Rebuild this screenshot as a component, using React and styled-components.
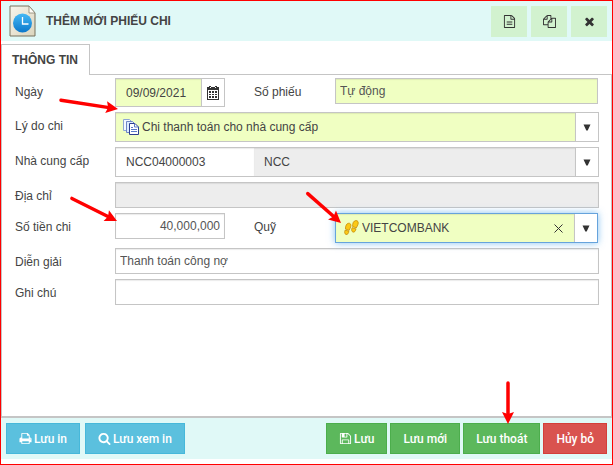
import React from "react";
import styled, { createGlobalStyle, css } from "styled-components";

const GlobalStyle = createGlobalStyle`
  *, *::before, *::after { box-sizing: border-box; }
  html, body, #root { height: 100%; }
  body {
    margin: 0;
    background: #fff;
    color: #444;
    font-family: "Liberation Sans", Arial, sans-serif;
    font-size: 12px;
  }
  button, input, select { font: inherit; color: inherit; margin: 0; }
`;

const Dialog = styled.form`
  display: flex;
  flex-direction: column;
  min-height: 100%;
  border: 1px solid #f00;
  padding-bottom: 5px;
`;

const Header = styled.header`
  display: flex;
  align-items: center;
  height: 40px;
  padding: 0 5px 0 8px;
  background: #e0f9f7;
`;

const Title = styled.h1`
  flex: 1;
  margin: 0 0 0 9px;
  font-size: 12px;
  font-weight: bold;
  color: #444;
`;

const HeaderActions = styled.div`
  display: flex;
  gap: 4px;
`;

const HeaderButton = styled.button`
  display: flex;
  align-items: center;
  justify-content: center;
  width: 36px;
  height: 31px;
  padding: 0;
  border: 0;
  background: #d2f2cf;
  color: #333;
`;

const TabBar = styled.div`
  display: flex;
  margin-top: 3px;
`;

const Tab = styled.button`
  position: relative;
  z-index: 1;
  height: 31px;
  margin-bottom: -1px;
  padding: 0 11px 0 10px;
  border: 1px solid #c5c5c5;
  border-bottom: 0;
  background: #fff;
  font-size: 12px;
  font-weight: bold;
  color: #444;
`;

const Panel = styled.div`
  flex: 1;
  display: flex;
  flex-direction: column;
  gap: 5px;
  padding: 3px 12px 12px 13px;
  border: 1px solid #c5c5c5;
  border-bottom-width: 2px;
`;

const Row = styled.div`
  display: grid;
  grid-template-columns: 100px minmax(0, 1fr);
  align-items: start;
`;

const SplitRow = styled(Row)`
  grid-template-columns: 100px 110px 110px minmax(0, 1fr);
  padding-right: 1px;
`;

const Label = styled.label`
  padding-top: 2px;
  padding-left: ${(p) => (p.$second ? "29px" : "0")};
  line-height: 24px;
  white-space: nowrap;
`;

const Field = styled.div`
  position: relative;
  display: flex;
`;

const fill = { required: "#f0ffc2", disabled: "#ededed", plain: "#fff" };

const inset = css`
  box-shadow: inset 0 1px 1px rgba(0, 0, 0, 0.08);
`;

const TextBox = styled.input`
  width: 100%;
  min-width: 0;
  height: 26px;
  padding: 0 4px;
  border: 1px solid #c5c5c5;
  border-radius: 0;
  outline: 0;
  background: ${(p) => fill[p.$kind || "plain"]};
  text-align: ${(p) => p.$align || "left"};
  color: #555;
  ${inset}
`;

const Combo = styled.div`
  display: flex;
  flex: 1;
  min-width: 0;
  height: ${(p) => (p.$short ? "29px" : "30px")};
  border: 1px solid ${(p) => (p.$focused ? "#66a3dc" : "#c5c5c5")};
  background: #fff;
  box-shadow: ${(p) => (p.$focused ? "0 0 7px rgba(82, 168, 236, 0.7)" : "none")};
`;

const ComboPart = styled.div`
  display: flex;
  align-items: center;
  flex: ${(p) => p.$flex || "1"};
  min-width: 0;
  padding: 0 8px 0 ${(p) => p.$inset || "10px"};
  background: ${(p) => fill[p.$kind || "plain"]};
  ${inset}
`;

const comboText = css`
  flex: 1;
  min-width: 0;
  width: 100%;
  height: 100%;
  padding: 0;
  border: 0;
  outline: 0;
  background: transparent;
`;

const ComboInput = styled.input`
  ${comboText}
`;

const ComboSelect = styled.select`
  ${comboText}
  appearance: none;
  margin-left: 3px;
`;

const ComboButton = styled.button`
  display: flex;
  align-items: center;
  justify-content: center;
  flex: none;
  width: 23px;
  padding: 0;
  border: 0;
  border-left: 1px solid #c5c5c5;
  background: #fff;
  color: #333;
`;

const ClearButton = styled.button`
  display: flex;
  align-items: center;
  justify-content: center;
  width: 15px;
  height: 20px;
  padding: 0;
  border: 0;
  background: none;
`;

const Footer = styled.footer`
  display: flex;
  justify-content: space-between;
  padding: 5px;
  background: #e0f9f7;
`;

const ButtonGroup = styled.div`
  display: flex;
  gap: ${(p) => p.$gap};
`;

const tone = {
  info: ["#5bc0de", "#46b8da"],
  success: ["#5cb85c", "#4cae4c"],
  danger: ["#d9534f", "#d43f3a"],
};

const ActionButton = styled.button`
  position: relative;
  display: flex;
  align-items: center;
  justify-content: center;
  gap: 2px;
  height: 31px;
  padding: 0 12px;
  border: 1px solid ${(p) => tone[p.$tone][1]};
  background: ${(p) => tone[p.$tone][0]};
  color: #fff;
  font-family: Roboto, sans-serif;
  font-size: 12px;
  font-weight: 500;
  white-space: nowrap;
`;

const Pointer = styled.svg`
  position: absolute;
  z-index: 2;
  left: ${(p) => p.$left};
  top: ${(p) => p.$top};
  overflow: visible;
  pointer-events: none;
`;

const glyphs = {
  file: "M1596 380q28 28 48 76t20 88v1152q0 40-28 68t-68 28h-1344q-40 0-68-28t-28-68v-1600q0-40 28-68t68-28h896q40 0 88 20t76 48zm-444-244v376h376q-10-29-22-41l-313-313q-12-12-41-22zm384 1528v-1024h-416q-40 0-68-28t-28-68v-416h-768v1536h1280zM512 896h768v128h-768zM512 1216h768v128h-768z",
  copy: "M1696 384q40 0 68 28t28 68v1216q0 40-28 68t-68 28h-960q-40 0-68-28t-28-68v-288h-544q-40 0-68-28t-28-68v-672q0-40 20-88t48-76l408-408q28-28 76-48t88-20h416q40 0 68 28t28 68v328q68-40 128-40h416zm-544 213l-299 299h299v-299zm-640-384l-299 299h299v-299zm196 647l316-316v-416h-384v416q0 40-28 68t-68 28h-416v640h512v-256q0-40 20-88t48-76zm956 804v-1152h-384v416q0 40-28 68t-68 28h-416v640h896z",
  close: "M1490 1322q0 40-28 68l-136 136q-28 28-68 28t-68-28l-294-294-294 294q-28 28-68 28t-68-28l-136-136q-28-28-28-68t28-68l294-294-294-294q-28-28-28-68t28-68l136-136q28-28 68-28t68 28l294 294 294-294q28-28 68-28t68 28l136 136q28 28 28 68t-28 68l-294 294 294 294q28 28 28 68z",
  print: "M448 1536h896v-256h-896v256zm0-640h896v-384h-160q-40 0-68-28t-28-68v-160h-640v640zm1152 64q0-26-19-45t-45-19-45 19-19 45 19 45 45 19 45-19 19-45zm128 0v416q0 13-9.5 22.5t-22.5 9.5h-224v160q0 40-28 68t-68 28h-960q-40 0-68-28t-28-68v-160h-224q-13 0-22.5-9.5t-9.5-22.5v-416q0-79 56.5-135.5t135.5-56.5h64v-544q0-40 28-68t68-28h672q40 0 88 20t76 48l152 152q28 28 48 76t20 88v256h64q79 0 135.5 56.5t56.5 135.5z",
  search: "M1216 832q0-185-131.5-316.5t-316.5-131.5-316.5 131.5-131.5 316.5 131.5 316.5 316.5 131.5 316.5-131.5 131.5-316.5zm512 832q0 52-38 90t-90 38q-54 0-90-38l-343-342q-179 124-399 124-143 0-273.5-55.5t-225-150-150-225-55.5-273.5 55.5-273.5 150-225 225-150 273.5-55.5 273.5 55.5 225 150 150 225 55.5 273.5q0 220-124 399l343 343q37 37 37 90z",
  save: "M512 1536h768v-384h-768v384zm896 0h128v-896q0-14-10-38.5t-20-34.5l-281-281q-10-10-34-20t-39-10v416q0 40-28 68t-68 28h-576q-40 0-68-28t-28-68v-416h-128v1280h128v-416q0-40 28-68t68-28h832q40 0 68 28t28 68v416zm-384-928v-320q0-13-9.5-22.5t-22.5-9.5h-192q-13 0-22.5 9.5t-9.5 22.5v320q0 13 9.5 22.5t22.5 9.5h192q13 0 22.5-9.5t9.5-22.5zm640 32v928q0 40-28 68t-68 28h-1344q-40 0-68-28t-28-68v-1344q0-40 28-68t68-28h928q40 0 88 20t76 48l280 280q28 28 48 76t20 88z",
};

const Glyph = ({ name, size = 13 }) => (
  <svg width={size} height={size} viewBox="0 0 1792 1792" fill="currentColor" aria-hidden="true">
    <path d={glyphs[name]} />
  </svg>
);

const Caret = () => (
  <svg width="8" height="7" viewBox="0 0 8 7" fill="currentColor" aria-hidden="true">
    <path d="M0.5 0.5h7L4.7 6.5H3.3z" />
  </svg>
);

const Cross = () => (
  <svg width="9" height="9" viewBox="0 0 9 9" stroke="#333" aria-hidden="true">
    <path d="M0.5 0.5l8 8M8.500 0.500l-8 8" />
  </svg>
);

const CalendarIcon = () => (
  <svg width="12" height="14" viewBox="0 0 12 14" aria-hidden="true">
    <path d="M0 1h12v13H0zM2 0h2v1H2zM8 0h2v1H8z" fill="#333" />
    <path d="M1 4h10v9H1zM3 1h1v1H3zM8 1h1v1H8z" fill="#fff" />
    <path
      d="M2 5h2v2H2zM5 5h2v2H5zM8 5h2v2H8zM2 8h2v1H2zM5 8h2v1H5zM8 8h2v1H8zM2 10h2v2H2zM5 10h2v2H5zM8 10h2v2H8z"
      fill="#333"
    />
  </svg>
);

const VoucherIcon = () => (
  <svg width="28" height="32" viewBox="0 0 28 32" aria-hidden="true">
    <defs>
      <linearGradient id="paper" x1="0" y1="0" x2="1" y2="1">
        <stop offset="0" stopColor="#f7f5ec" />
        <stop offset="1" stopColor="#dbd5bd" />
      </linearGradient>
      <linearGradient id="clock" x1="0" y1="0" x2="0" y2="1">
        <stop offset="0" stopColor="#45b9f5" />
        <stop offset="1" stopColor="#0b78cb" />
      </linearGradient>
    </defs>
    <path d="M1 1h19l6 7v23H1z" fill="url(#paper)" stroke="#77725f" />
    <path d="M20 1v7h6z" fill="#fffef8" stroke="#8b8672" strokeWidth="0.8" />
    <circle cx="13.500" cy="18" r="9.500" fill="url(#clock)" />
    <path d="M13.500 12v7h6" fill="none" stroke="#fff" strokeWidth="1.300" />
  </svg>
);

const PagesIcon = () => (
  <svg width="16" height="16" viewBox="0 0 16 16" stroke="#4a5fae" aria-hidden="true">
    <path d="M0.500 0.500h6l3 3v8h-9z" fill="#f4f8ff" stroke="#8ea6d4" />
    <path d="M3.500 2.500h6l3 3v8h-9z" fill="#dcebff" stroke="#6f87c4" />
    <path d="M6.500 4.500h5.500l3.500 3.500v7.500h-9z" fill="#fff" stroke="#2e3e8f" />
    <path d="M11.500 4.500v3.500h4M8 8.500h2M8 10.500h6M8 12.500h6" fill="none" stroke="#5b79c8" />
  </svg>
);

const FeetIcon = () => (
  <svg width="15" height="16" viewBox="0 0 15 16" fill="#fbc916" stroke="#c08300" strokeWidth="0.7" aria-hidden="true">
    <path d="M2.200 5c.8-1.900 3.600-2.500 4.500-.8.800 1.700-.3 3.600-1.600 6.200L1.500 9c-.1-1.600.1-2.800.7-4z" />
    <path d="M1.200 10l3.700 1.300c-.3 2.100-1.400 3.600-2.900 3.200-1.700-.5-1.600-2.800-.8-4.500z" />
    <path d="M9.300 2.300c.9-1.900 3.900-2.400 4.700-.7.800 1.800-.3 3.800-1.700 6.300L8.600 6.500c-.1-1.600.1-3 .7-4.200z" />
    <path d="M8.200 7.600l3.800 1.300c-.4 2.100-1.500 3.600-3 3.200-1.700-.5-1.600-2.800-.8-4.500z" />
  </svg>
);

/* Red callout arrow running from its own origin to (dx, dy). */
const Arrow = ({ left, top, dx, dy }) => {
  const length = Math.hypot(dx, dy);
  const angle = (Math.atan2(dy, dx) * 180) / Math.PI;
  return (
    <Pointer $left={left} $top={top} width="1" height="1" aria-hidden="true">
      <g transform={`rotate(${angle})`} fill="#f00">
        <path d={`M1 0H${length - 9}`} stroke="#f00" strokeWidth="3.500" strokeLinecap="round" />
        <path d={`M${length} 0l-12 -6l2 6l-2 6z`} />
      </g>
    </Pointer>
  );
};

export default function App() {
  return (
    <>
      <GlobalStyle />
      <Dialog onSubmit={(e) => e.preventDefault()}>
        <Header>
          <VoucherIcon />
          <Title>THÊM MỚI PHIẾU CHI</Title>
          <HeaderActions>
            <HeaderButton type="button" aria-label="Phiếu mới"><Glyph name="file" /></HeaderButton>
            <HeaderButton type="button" aria-label="Sao chép"><Glyph name="copy" /></HeaderButton>
            <HeaderButton type="button" aria-label="Đóng"><Glyph name="close" /></HeaderButton>
          </HeaderActions>
        </Header>

        <TabBar role="tablist">
          <Tab type="button" role="tab" aria-selected="true">THÔNG TIN</Tab>
        </TabBar>

        <Panel role="tabpanel">
          <SplitRow>
            <Label htmlFor="date">Ngày</Label>
            <Field>
              <Combo $short>
                <ComboPart $kind="required">
                  <ComboInput id="date" defaultValue="09/09/2021" />
                </ComboPart>
                <ComboButton type="button" aria-label="Chọn ngày"><CalendarIcon /></ComboButton>
              </Combo>
              <Arrow left="-55px" top="22px" dx={58} dy={9} />
            </Field>
            <Label htmlFor="number" $second>Số phiếu</Label>
            <TextBox id="number" $kind="required" defaultValue="Tự động" />
          </SplitRow>

          <Row>
            <Label htmlFor="reason">Lý do chi</Label>
            <Combo>
              <ComboPart $kind="required" $inset="7px">
                <PagesIcon />
                <ComboSelect id="reason">
                  <option>Chi thanh toán cho nhà cung cấp</option>
                </ComboSelect>
              </ComboPart>
              <ComboButton type="button" aria-label="Mở danh sách lý do"><Caret /></ComboButton>
            </Combo>
          </Row>

          <Row>
            <Label htmlFor="supplier">Nhà cung cấp</Label>
            <Combo>
              <ComboPart $flex="0 0 138px">
                <ComboInput id="supplier" defaultValue="NCC04000003" />
              </ComboPart>
              <ComboPart $kind="disabled">
                <ComboInput aria-label="Tên nhà cung cấp" readOnly value="NCC" />
              </ComboPart>
              <ComboButton type="button" aria-label="Mở danh sách nhà cung cấp"><Caret /></ComboButton>
            </Combo>
          </Row>

          <Row>
            <Label htmlFor="address">Địa chỉ</Label>
            <TextBox id="address" $kind="disabled" readOnly value="" />
          </Row>

          <SplitRow>
            <Label htmlFor="amount">Số tiền chi</Label>
            <Field>
              <TextBox id="amount" $align="right" defaultValue="40,000,000" />
              <Arrow left="-44px" top="-15px" dx={46} dy={23} />
            </Field>
            <Label htmlFor="fund" $second>Quỹ</Label>
            <Field>
              <Combo $focused>
                <ComboPart $kind="required" $inset="8px">
                  <FeetIcon />
                  <ComboSelect id="fund">
                    <option>VIETCOMBANK</option>
                  </ComboSelect>
                  <ClearButton type="button" aria-label="Xóa quỹ"><Cross /></ClearButton>
                </ComboPart>
                <ComboButton type="button" aria-label="Mở danh sách quỹ"><Caret /></ComboButton>
              </Combo>
              <Arrow left="-28px" top="-20px" dx={34} dy={30} />
            </Field>
          </SplitRow>

          <Row>
            <Label htmlFor="description">Diễn giải</Label>
            <TextBox id="description" defaultValue="Thanh toán công nợ" />
          </Row>

          <Row>
            <Label htmlFor="note">Ghi chú</Label>
            <TextBox id="note" />
          </Row>
        </Panel>

        <Footer>
          <ButtonGroup $gap="5px">
            <ActionButton type="button" $tone="info"><Glyph name="print" />Lưu in</ActionButton>
            <ActionButton type="button" $tone="info"><Glyph name="search" />Lưu xem in</ActionButton>
          </ButtonGroup>
          <ButtonGroup $gap="3px">
            <ActionButton type="submit" $tone="success"><Glyph name="save" />Lưu</ActionButton>
            <ActionButton type="button" $tone="success">Lưu mới</ActionButton>
            <ActionButton type="button" $tone="success">
              Lưu thoát
              <Arrow left="44px" top="-42px" dx={0} dy={42} />
            </ActionButton>
            <ActionButton type="button" $tone="danger">Hủy bỏ</ActionButton>
          </ButtonGroup>
        </Footer>
      </Dialog>
    </>
  );
}
